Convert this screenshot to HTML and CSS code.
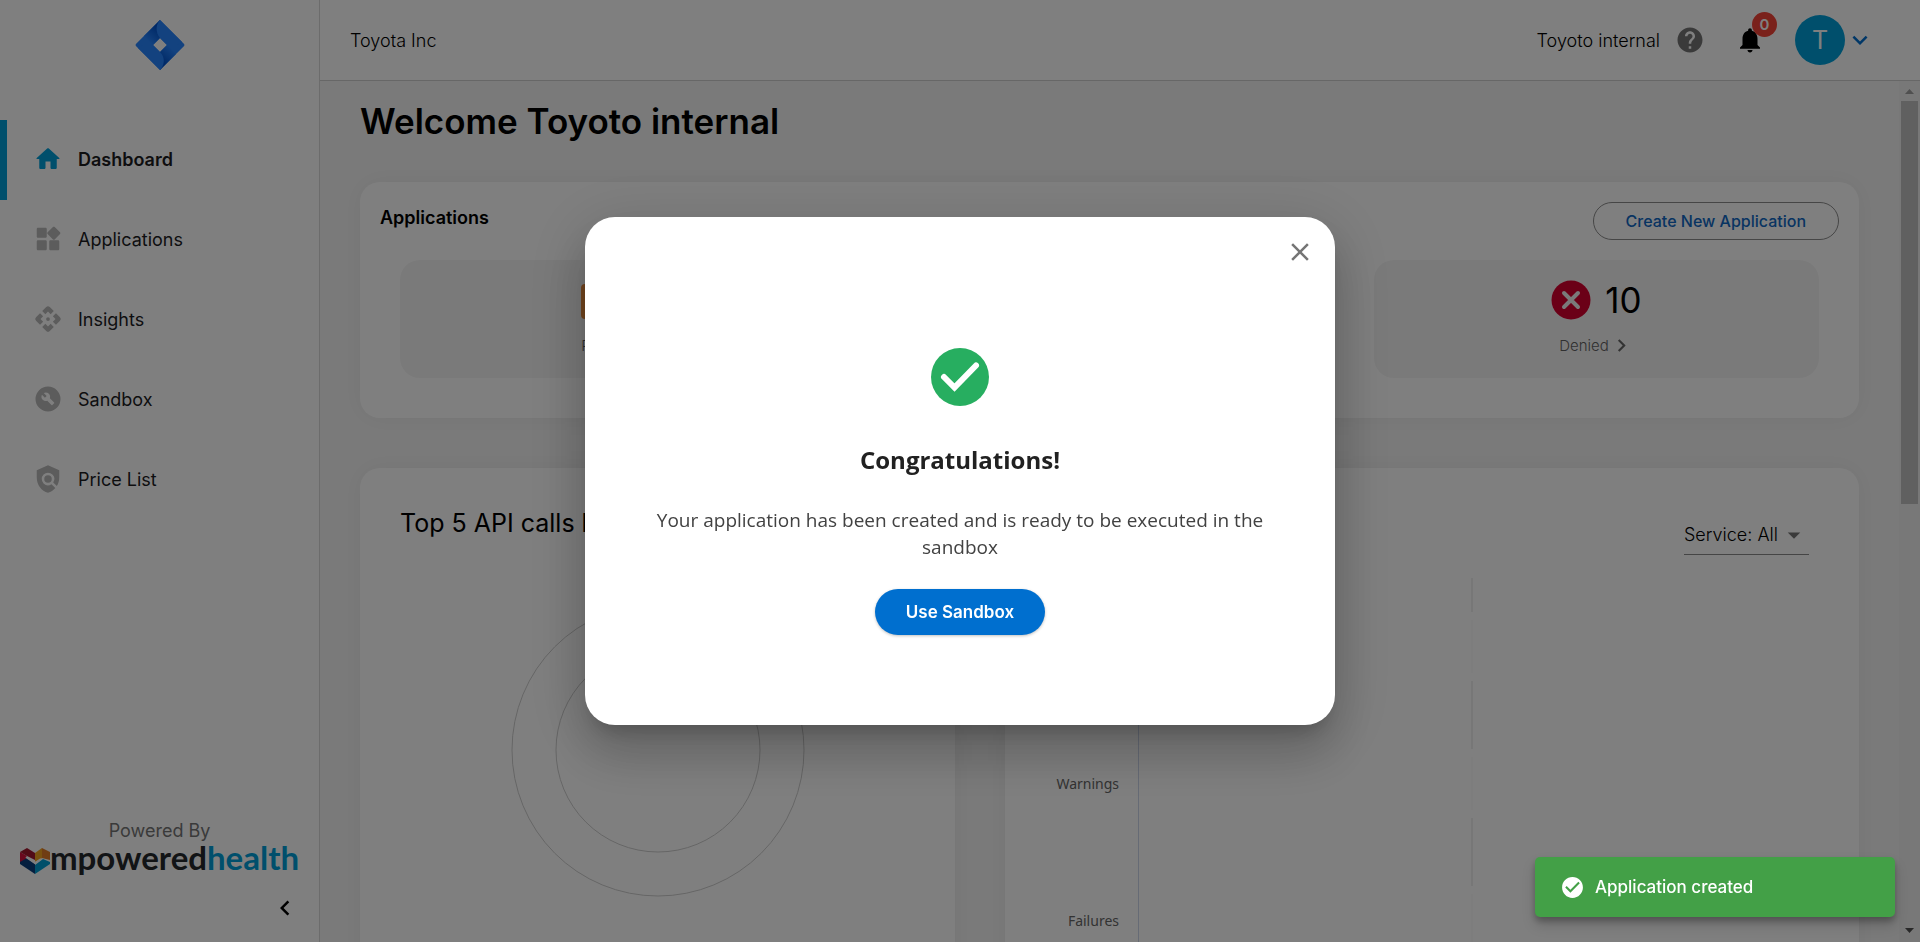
FILE: index.html
```html
<!DOCTYPE html>
<html lang="en">
<head>
<meta charset="utf-8">
<title>Dashboard</title>
<link rel="stylesheet" href="styles.css">
</head>
<body>
<div class="app">
  <aside class="sidebar">
    <svg class="brand" viewBox="0 0 50 50" aria-hidden="true">
      <defs>
        <linearGradient id="ga" x1="23" y1="8" x2="12" y2="20" gradientUnits="userSpaceOnUse"><stop offset="0" stop-color="#0052cc"/><stop offset="1" stop-color="#2684ff"/></linearGradient>
        <linearGradient id="gb" x1="27" y1="42" x2="38" y2="30" gradientUnits="userSpaceOnUse"><stop offset="0" stop-color="#0052cc"/><stop offset="1" stop-color="#2684ff"/></linearGradient>
      </defs>
      <path fill="#2684ff" d="M25 0 49.300 24.300V25.700L25 50 .7 25.700V24.300ZM25 18l-7 7 7 7 7-7Z" fill-rule="evenodd"/>
      <path fill="url(#ga)" d="M25 0v18l-7 7L9 16Z"/>
      <path fill="#2684ff" d="M25 0c-4 4-5 12 0 18l7 7h10l5-3Z"/>
      <path fill="url(#gb)" d="M25 50V32l7-7 9 9Z"/>
      <path fill="#2684ff" d="M25 50c4-4 6-12 0-18l-7-7H8l-5 3Z"/>
    </svg>
    <nav class="nav">
      <a class="nav-item active" href="#"><svg viewBox="0 0 24 24"><path d="M10 19v-5h4v5c0 .55.45 1 1 1h3c.55 0 1-.45 1-1v-7h1.700c.46 0 .68-.57.33-.87L12.670 3.600c-.38-.34-.96-.34-1.340 0l-8.360 7.530c-.34.3-.13.87.33.87H5v7c0 .55.45 1 1 1h3c.55 0 1-.45 1-1z"/></svg>Dashboard</a>
      <a class="nav-item" href="#"><svg viewBox="0 0 24 24"><path d="M13 14v6c0 .55.45 1 1 1h6c.55 0 1-.45 1-1v-6c0-.55-.45-1-1-1h-6c-.55 0-1 .45-1 1zm-9 7h6c.55 0 1-.45 1-1v-6c0-.55-.45-1-1-1H4c-.55 0-1 .45-1 1v6c0 .55.45 1 1 1zM3 4v6c0 .55.45 1 1 1h6c.55 0 1-.45 1-1V4c0-.55-.45-1-1-1H4c-.55 0-1 .45-1 1zm12.950-1.600L11.700 6.640c-.39.39-.39 1.020 0 1.410l4.250 4.250c.39.39 1.020.39 1.410 0l4.250-4.250c.39-.39.39-1.020 0-1.410L17.370 2.400c-.39-.39-1.030-.39-1.420 0z"/></svg>Applications</a>
      <a class="nav-item" href="#"><svg viewBox="0 0 24 24"><circle cx="12" cy="12" r="1.500"/><path d="M12 6l2.120 2.120 2.500-2.500-3.200-3.200a2 2 0 0 0-2.840 0l-3.200 3.200 2.500 2.500L12 6zm-6 6 2.120-2.120-2.500-2.500-3.200 3.200a2 2 0 0 0 0 2.840l3.200 3.200 2.500-2.500L6 12zm12 0-2.120 2.120 2.500 2.500 3.200-3.200a2 2 0 0 0 0-2.840l-3.200-3.200-2.500 2.500L18 12zm-6 6-2.120-2.120-2.500 2.500 3.200 3.200a2 2 0 0 0 2.840 0l3.200-3.200-2.500-2.500L12 18z"/></svg>Insights</a>
      <a class="nav-item" href="#"><svg viewBox="0 0 24 24"><path fill-rule="evenodd" d="M12 2a10 10 0 1 0 0 20 10 10 0 0 0 0-20zm4.900 13.490-1.400 1.400c-.2.200-.51.200-.71 0l-3.410-3.410c-1.220.43-2.640.17-3.620-.81-1.110-1.110-1.300-2.790-.59-4.100l2.350 2.350 1.410-1.410-2.350-2.350c1.320-.71 2.990-.52 4.100.59.980.98 1.240 2.400.81 3.620l3.410 3.410c.2.190.2.510 0 .71z"/></svg>Sandbox</a>
      <a class="nav-item" href="#"><svg viewBox="0 0 24 24"><path d="M21 5l-9-4-9 4v6c0 5.550 3.840 10.740 9 12 2.300-.56 4.330-1.900 5.880-3.710l-3.120-3.120A4.994 4.994 0 0 1 8.460 15.530 5.003 5.003 0 0 1 8.460 8.460a5.003 5.003 0 0 1 7.070 0 5.006 5.006 0 0 1 .64 6.290l2.900 2.900C20.290 15.690 21 13.380 21 11V5z"/><circle cx="12" cy="12" r="3"/></svg>Price List</a>
    </nav>
    <div class="powered">
      <span>Powered By</span>
      <div class="mph">
        <svg class="mph-mark" viewBox="0 0 30 26" aria-hidden="true">
          <path fill="#d5103c" d="M0 4l7 4v4l-7 3z"/>
          <path fill="#a3182f" d="M0 4l7-4 8 5v7L7 8z"/>
          <path fill="#f2a41f" d="M15 5l7-5v10l-7 4z"/>
          <path fill="#e07b26" d="M22 0l8 4v8l-8-2z"/>
          <path fill="#0b3f7f" d="M0 14l7-4 8 6v10L0 16z"/>
          <path fill="#009fd4" d="M15 17l8-6 7 3v2L15 26z"/>
          <path fill="none" stroke="#fff" stroke-width="2" d="M6 9l9 6 6-4"/>
        </svg>
        <span class="mph-a">mpowered</span><span class="mph-b">health</span>
      </div>
    </div>
    <button class="collapse" aria-label="Collapse menu"><svg viewBox="0 0 24 24"><path d="M15.410 7.410 14 6l-6 6 6 6 1.410-1.410L10.830 12z"/></svg></button>
  </aside>

  <div class="page">
    <header class="topbar">
      <span class="org">Toyota Inc</span>
      <div class="account">
        <span>Toyoto internal</span>
        <svg class="help" viewBox="0 0 24 24"><path d="M12 2C6.480 2 2 6.480 2 12s4.480 10 10 10 10-4.480 10-10S17.520 2 12 2zm1 17h-2v-2h2v2zm2.070-7.750-.9.920C13.450 12.900 13 13.500 13 15h-2v-.5c0-1.100.45-2.100 1.170-2.830l1.240-1.260c.37-.36.59-.86.59-1.410 0-1.100-.9-2-2-2s-2 .9-2 2H8c0-2.210 1.790-4 4-4s4 1.790 4 4c0 .88-.36 1.680-.93 2.250z"/></svg>
        <button class="bell" aria-label="Notifications"><svg viewBox="0 0 24 24"><path d="M12 22c1.100 0 2-.9 2-2h-4c0 1.100.89 2 2 2zm6-6v-5c0-3.070-1.640-5.640-4.500-6.320V4c0-.83-.67-1.500-1.500-1.500s-1.500.67-1.500 1.500v.68C7.630 5.360 6 7.920 6 11v5l-2 2v1h16v-1l-2-2z"/></svg><span class="badge">0</span></button>
        <button class="profile" aria-label="Account menu"><span class="avatar">T</span><svg viewBox="0 0 24 24"><path d="M7.410 8.590 12 13.170l4.590-4.580L18 10l-6 6-6-6z"/></svg></button>
      </div>
    </header>

    <div class="scroll">
      <main class="content">
        <h1>Welcome Toyoto internal</h1>
        <section class="card apps">
          <div class="apps-head"><h2>Applications</h2><button class="outline">Create New Application</button></div>
          <div class="tiles">
            <a class="tile" href="#"><span class="count"><svg viewBox="0 0 40 40"><rect x="6" y="6" width="31" height="31" rx="2" fill="none" stroke="#e88b3d" stroke-width="4"/></svg>10</span><span class="state">Pending<svg viewBox="0 0 24 24"><path d="M8.590 16.590 13.170 12 8.590 7.410 10 6l6 6-6 6z"/></svg></span></a>
            <div class="tile"></div>
            <a class="tile" href="#"><span class="count"><svg viewBox="0 0 40 40"><circle cx="20" cy="20" r="19.500" fill="#d7002f"/><path d="M13 13l14 14M27 13L13 27" stroke="#f4f4f4" stroke-width="4" stroke-linecap="round"/></svg>10</span><span class="state">Denied<svg viewBox="0 0 24 24"><path d="M8.590 16.590 13.170 12 8.590 7.410 10 6l6 6-6 6z"/></svg></span></a>
          </div>
        </section>
        <div class="charts">
          <section class="card chart-card">
            <h3>Top 5 API calls by</h3>
            <svg class="donut" viewBox="0 0 294 294"><circle cx="147" cy="147" r="146"/><circle cx="147" cy="147" r="102"/></svg>
          </section>
          <section class="card chart-card">
            <div class="filter"><select aria-label="Service"><option>Service: All</option></select><svg viewBox="0 0 24 24"><path d="M7 10l5 5 5-5z"/></svg></div>
            <div class="bars">
              <div class="bar-labels"><span></span><span>Warnings</span><span>Failures</span></div>
              <div class="plot"><div class="gridline"></div></div>
            </div>
          </section>
        </div>
      </main>
      <div class="scrollbar" aria-hidden="true"><svg viewBox="0 0 21 20"><path fill="#a0a0a0" d="M6 13h9l-4.500-5z"/></svg><div class="thumb"></div><svg viewBox="0 0 21 20"><path fill="#505050" d="M6 6h9l-4.500 5z"/></svg></div>
    </div>
  </div>
</div>

<div class="overlay">
  <div class="modal" role="dialog" aria-modal="true" aria-labelledby="dlg">
    <button class="close" aria-label="Close"><svg viewBox="0 0 24 24"><path d="M19 6.410 17.590 5 12 10.590 6.410 5 5 6.410 10.590 12 5 17.590 6.410 19 12 13.410 17.590 19 19 17.590 13.410 12z"/></svg></button>
    <svg class="check" viewBox="0 0 58 58"><circle cx="29" cy="29" r="29" fill="#27ae60"/><path d="M13 29l10.500 10.500L45 17.500" fill="none" stroke="#fff" stroke-width="6" stroke-linecap="round"/></svg>
    <h2 id="dlg">Congratulations!</h2>
    <p>Your application has been created and is ready to be executed in the sandbox</p>
    <button class="primary">Use Sandbox</button>
  </div>
</div>

<div class="toast" role="status"><svg viewBox="0 0 24 24"><path d="M12 2C6.480 2 2 6.480 2 12s4.480 10 10 10 10-4.480 10-10S17.520 2 12 2zm-2 15-5-5 1.410-1.410L10 14.170l7.590-7.590L19 8l-9 9z"/></svg>Application created</div>
</body>
</html>
```
FILE: styles.css
```css
* { box-sizing: border-box; }
body { margin: 0; font-family: Inter, "Liberation Sans", sans-serif; font-size: 18px; color: #000; overflow: hidden; }
button { border: 0; background: none; padding: 0; font: inherit; color: inherit; cursor: pointer; }
a { color: inherit; text-decoration: none; }
h1, h2, h3, p { margin: 0; }
svg { display: block; flex: none; }
.app { display: flex; height: 100vh; background: #fff; }
.sidebar { width: 320px; flex: none; display: flex; flex-direction: column; border-right: 1px solid #d8d8d8; }
.brand { width: 50px; height: 50px; margin: 20px auto 50px; }
.nav-item { display: flex; align-items: center; gap: 15px; height: 80px; padding: 0 0 2px 33px; color: #1c1c1f; }
.nav-item svg { width: 30px; height: 30px; fill: #b8b8b8; }
.nav-item.active { border-left: 7px solid #009fd9; padding-left: 26px; font-weight: 600; }
.nav-item.active svg { fill: #009fd9; }
.powered { margin-top: auto; display: flex; flex-direction: column; align-items: center; color: #757575; line-height: 22px; }
.mph { display: flex; align-items: center; font-family: Lato, sans-serif; font-size: 33px; font-weight: 700; line-height: 28px; }
.mph-mark { width: 30px; height: 26px; margin: 6px 0 -3px; }
.mph-a { color: #25282d; }
.mph-b { color: #009fd9; }
.collapse { align-self: flex-end; margin: 22px 19px 19px 0; }
.collapse svg { width: 30px; height: 30px; }
.page { flex: 1; min-width: 0; display: flex; flex-direction: column; }
.topbar { height: 81px; flex: none; display: flex; justify-content: space-between; align-items: center; padding: 0 45px 0 30px; border-bottom: 1px solid #cfcfcf; font-weight: 300; }
.account { display: flex; align-items: center; }
.help { width: 30px; height: 30px; margin-left: 15px; fill: #757575; }
.bell { position: relative; margin-left: 30px; }
.bell svg { width: 30px; height: 30px; }
.badge { position: absolute; left: 17px; top: -13px; width: 25px; height: 25px; border-radius: 50%; background: #f44336; color: #fff; font-size: 15px; font-weight: 600; line-height: 25px; }
.profile { display: flex; align-items: center; margin-left: 30px; }
.profile svg { width: 30px; height: 30px; fill: #006ecf; }
.avatar { width: 50px; height: 50px; border-radius: 50%; background: #009fd9; color: #fff; font-size: 25px; font-weight: 400; line-height: 50px; }
.scroll { flex: 1; min-height: 0; display: flex; background: #f5f5f5; }
.content { flex: 1; min-width: 0; padding: 20px 40px; overflow: hidden; }
h1 { font-size: 35px; line-height: 41px; font-weight: 600; margin-bottom: 40px; }
.card { background: #fff; border-radius: 20px; box-shadow: 0 0 25px rgba(0, 0, 0, .05); }
.apps { padding: 20px 20px 40px; }
.apps-head { display: flex; justify-content: space-between; height: 58px; align-items: flex-start; }
.apps-head h2 { font-size: 18px; line-height: 32px; font-weight: 600; }
.outline { height: 38px; padding: 0 32px; border: 1px solid #8c8c8c; border-radius: 19px; color: #1068c4; font-size: 16px; font-weight: 500; }
.tiles { display: grid; grid-template-columns: repeat(3, 1fr); gap: 42px; padding: 0 20px; }
.tile { height: 118px; border-radius: 20px; background: #f5f5f5; display: flex; flex-direction: column; align-items: center; padding-top: 20px; }
.count { display: flex; align-items: center; gap: 14px; font-size: 35px; line-height: 40px; }
.count svg { width: 40px; height: 40px; }
.state { display: flex; align-items: center; margin-top: 13px; font-size: 15px; font-weight: 300; line-height: 25px; color: #616161; }
.state svg { width: 25px; height: 25px; fill: #666; }
.charts { display: grid; grid-template-columns: 595fr 854fr; gap: 50px; margin-top: 50px; }
.chart-card { height: 600px; padding: 40px; }
h3 { font-size: 25px; line-height: 30px; font-weight: 400; }
.donut { display: block; width: 294px; height: 294px; margin: 65px auto 0; fill: none; stroke: #ccc; }
.filter { display: flex; align-items: center; width: 125px; height: 40px; margin: 7px 10px 0 auto; border-bottom: 1px solid #8a8a8a; }
.filter select { appearance: none; width: 95px; border: 0; padding: 0; background: none; font: inherit; font-weight: 300; color: #000; }
.filter svg { width: 30px; height: 30px; fill: #757575; }
.bars { display: flex; margin-top: 23px; }
.bar-labels { width: 74px; display: flex; flex-direction: column; text-align: right; font: 14px "Noto Sans", sans-serif; color: #666; }
.bar-labels span { height: 137px; line-height: 137px; }
.plot { flex: 1; margin-left: 19px; border-left: 1px solid #ccd6eb; }
.gridline { width: 2px; height: 100%; margin-left: 332px; background: repeating-linear-gradient(#efefef 0 34px, #fff 34px 42px, #fbfbfb 42px 95px, #fff 95px 103px, #efefef 103px 137px); }
.scrollbar { width: 21px; flex: none; display: flex; flex-direction: column; background: #f1f1f1; }
.scrollbar svg { width: 21px; height: 20px; }
.scrollbar svg:last-child { margin-top: auto; }
.thumb { height: 403px; margin: 0 2px; background: #c1c1c1; }
.overlay { position: fixed; inset: 0; display: flex; align-items: center; justify-content: center; background: rgba(0, 0, 0, .5); }
.modal { position: relative; width: 750px; padding: 131px 70px 90px; border-radius: 30px; background: #fff; display: flex; flex-direction: column; align-items: center; text-align: center; box-shadow: 0 14px 19px -9px rgba(0, 0, 0, .2), 0 30px 48px 4px rgba(0, 0, 0, .14), 0 11px 58px 10px rgba(0, 0, 0, .12); font-family: "Open Sans", "Noto Sans", sans-serif; }
.close { position: absolute; top: 20px; right: 20px; }
.close svg { width: 30px; height: 30px; fill: #757575; }
.check { width: 58px; height: 58px; }
.modal h2 { margin-top: 36px; font-size: 24px; line-height: 35px; font-weight: 700; color: #212121; }
.modal p { margin-top: 30px; font-size: 19px; line-height: 27px; color: #424242; }
.primary { margin-top: 28px; height: 46px; padding: 0 31px; border-radius: 23px; background: #006fcf; color: #fff; font: 600 17px Inter, sans-serif; box-shadow: 0 1px 3px rgba(0, 0, 0, .25); }
.toast { position: fixed; right: 25px; bottom: 25px; width: 360px; height: 60px; padding: 0 25px; border-radius: 5px; background: #43a047; color: #fff; display: flex; align-items: center; gap: 10px; font-size: 17px; font-weight: 500; box-shadow: 0 4px 6px rgba(0, 0, 0, .25), 0 8px 14px rgba(0, 0, 0, .16); }
.toast svg { width: 25px; height: 25px; fill: #fff; }
```
